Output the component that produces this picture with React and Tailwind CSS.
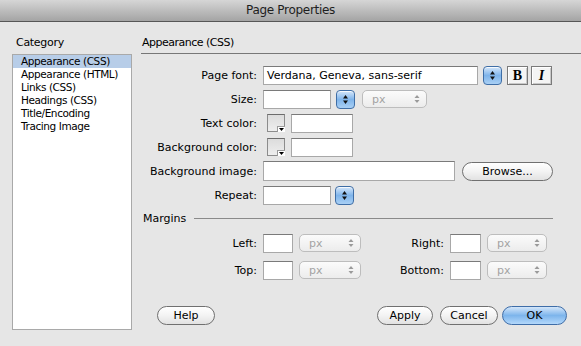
import React from 'react';

const Stepper = ({ className = '' }) => (
  <div
    className={`w-[19px] h-[19px] rounded-[4px] border border-[#3f6ea6] bg-gradient-to-b from-[#d5e7fa] via-[#7fb4ea] to-[#a9d0f5] flex items-center justify-center shadow-[inset_0_1px_0_rgba(255,255,255,0.8)] ${className}`}
  >
    <svg width="7" height="11" viewBox="0 0 7 11">
      <path d="M3.5 1 L6 4.5 L1 4.5 Z" fill="#111" />
      <path d="M3.5 10 L6 6.5 L1 6.5 Z" fill="#111" />
    </svg>
  </div>
);

const TextBox = ({ className = '', children }) => (
  <div
    className={`h-[19px] bg-white border border-[#a8a8a8] border-t-[#7a7a7a] flex items-center pl-[3px] whitespace-nowrap overflow-hidden ${className}`}
  >
    {children}
  </div>
);

const UnitSelect = ({ className = '' }) => (
  <div
    className={`h-[18px] rounded-[5px] border border-[#bdbdbd] bg-gradient-to-b from-[#fbfbfb] to-[#ececec] flex items-center justify-between pl-[9px] pr-[6px] text-[#a3a3a3] ${className}`}
  >
    <span>px</span>
    <svg width="6" height="10" viewBox="0 0 6 10">
      <path d="M3 1 L5.5 4 L0.5 4 Z" fill="#9a9a9a" />
      <path d="M3 9 L5.5 6 L0.5 6 Z" fill="#9a9a9a" />
    </svg>
  </div>
);

const Swatch = () => (
  <div className="relative w-[18px] h-[18px] border border-[#8c8c8c] border-t-[#6c6c6c] bg-gradient-to-b from-[#dcdcdc] to-[#eeeeee]">
    <div className="absolute right-[-1px] bottom-[-1px] w-[8px] h-[6px] bg-white border-l border-t border-[#9a9a9a] flex items-center justify-center">
      <svg width="5" height="3" viewBox="0 0 5 3">
        <path d="M0 0 L5 0 L2.5 3 Z" fill="#000" />
      </svg>
    </div>
  </div>
);

const PillButton = ({ children, className = '', primary = false }) => (
  <div
    className={`h-[19px] rounded-full border flex items-center justify-center ${
      primary
        ? 'border-[#3e6da8] bg-gradient-to-b from-[#d4e6f9] via-[#7db5ec] to-[#b3d8fb]'
        : 'border-[#707070] bg-gradient-to-b from-[#ffffff] via-[#f3f3f3] to-[#e2e2e2]'
    } ${className}`}
  >
    {children}
  </div>
);

const Label = ({ children, className = 'w-[122px]' }) => (
  <div className={`${className} text-right pr-[6px] whitespace-nowrap`}>{children}</div>
);

const categories = [
  'Appearance (CSS)',
  'Appearance (HTML)',
  'Links (CSS)',
  'Headings (CSS)',
  'Title/Encoding',
  'Tracing Image',
];

export default function App() {
  return (
    <div className="w-[581px] h-[346px] overflow-hidden bg-[#e6e6e6] text-[11px] leading-[13px] text-black font-['DejaVu_Sans',sans-serif]">
      {/* title bar */}
      <div className="h-[22px] border-b border-[#575757] bg-gradient-to-b from-[#d6d6d6] to-[#a4a4a4] flex items-center justify-center text-[12px] text-[#1e1e1e] tracking-[-0.3px]">
        Page Properties
      </div>

      <div className="flex">
        {/* category column */}
        <div className="w-[141px] shrink-0 pl-[12px] pt-[14px]">
          <div className="pl-[4px] tracking-[-0.3px]">Category</div>
          <div className="mt-[5px] w-[120px] h-[276px] bg-white border border-[#a9a9a9]">
            {categories.map((c, i) => (
              <div
                key={c}
                className={`h-[13px] pl-[8px] text-[10.5px] tracking-[-0.4px] leading-[13px] ${
                  i === 0 ? 'bg-[#b7cde8]' : ''
                }`}
              >
                {c}
              </div>
            ))}
          </div>
        </div>

        {/* right panel */}
        <div className="flex-1 pt-[14px]">
          <div className="pl-[1px] tracking-[-0.5px]">Appearance (CSS)</div>
          <div className="mt-[4px] border-t border-[#777]" />

          <div className="mt-[11px] flex flex-col gap-[4px]">
            <div className="h-[20px] flex items-center">
              <Label>Page font:</Label>
              <TextBox className="w-[215px]">Verdana, Geneva, sans-serif</TextBox>
              <Stepper className="ml-[5px]" />
              <div className="ml-[5px] w-[21px] h-[19px] border border-[#7a7a7a] bg-[#f4f4f4] shadow-[inset_1px_1px_0_#fff,inset_-1px_-1px_0_#c8c8c8] flex items-center justify-center font-['Liberation_Serif',serif] font-bold text-[14px]">
                B
              </div>
              <div className="ml-[3px] w-[21px] h-[19px] border border-[#7a7a7a] bg-[#f4f4f4] shadow-[inset_1px_1px_0_#fff,inset_-1px_-1px_0_#c8c8c8] flex items-center justify-center font-['Liberation_Serif',serif] font-bold italic text-[14px]">
                I
              </div>
            </div>

            <div className="h-[20px] flex items-center">
              <Label>Size:</Label>
              <TextBox className="w-[68px]" />
              <Stepper className="ml-[5px]" />
              <UnitSelect className="ml-[7px] w-[65px]" />
            </div>

            <div className="h-[20px] flex items-center">
              <Label>Text color:</Label>
              <div className="ml-[4px]">
                <Swatch />
              </div>
              <TextBox className="ml-[6px] w-[62px]" />
            </div>

            <div className="h-[20px] flex items-center">
              <Label>Background color:</Label>
              <div className="ml-[4px]">
                <Swatch />
              </div>
              <TextBox className="ml-[6px] w-[62px]" />
            </div>

            <div className="h-[20px] flex items-center">
              <Label>Background image:</Label>
              <TextBox className="w-[192px] h-[20px]" />
              <PillButton className="ml-[7px] w-[91px]">Browse...</PillButton>
            </div>

            <div className="h-[20px] flex items-center">
              <Label>Repeat:</Label>
              <TextBox className="w-[68px]" />
              <Stepper className="ml-[4px]" />
            </div>
          </div>

          <div className="mt-[7px] flex items-center pr-[28px]">
            <div className="pl-[2px] pr-[8px]">Margins</div>
            <div className="flex-1 border-t border-[#8a8a8a]" />
          </div>

          <div className="mt-[8px] flex flex-col gap-[7px]">
            <div className="h-[20px] flex items-center">
              <Label>Left:</Label>
              <TextBox className="w-[30px]" />
              <UnitSelect className="ml-[6px] w-[62px]" />
              <Label className="w-[89px]">Right:</Label>
              <TextBox className="w-[31px]" />
              <UnitSelect className="ml-[6px] w-[60px]" />
            </div>
            <div className="h-[20px] flex items-center">
              <Label>Top:</Label>
              <TextBox className="w-[30px]" />
              <UnitSelect className="ml-[6px] w-[62px]" />
              <Label className="w-[89px]">Bottom:</Label>
              <TextBox className="w-[31px]" />
              <UnitSelect className="ml-[6px] w-[60px]" />
            </div>
          </div>

          <div className="mt-[26px] flex items-center">
            <PillButton className="ml-[16px] w-[58px]">Help</PillButton>
            <PillButton className="ml-[162px] w-[56px]">Apply</PillButton>
            <PillButton className="ml-[7px] w-[58px]">Cancel</PillButton>
            <PillButton primary className="ml-[4px] w-[65px]">OK</PillButton>
          </div>
        </div>
      </div>
    </div>
  );
}
